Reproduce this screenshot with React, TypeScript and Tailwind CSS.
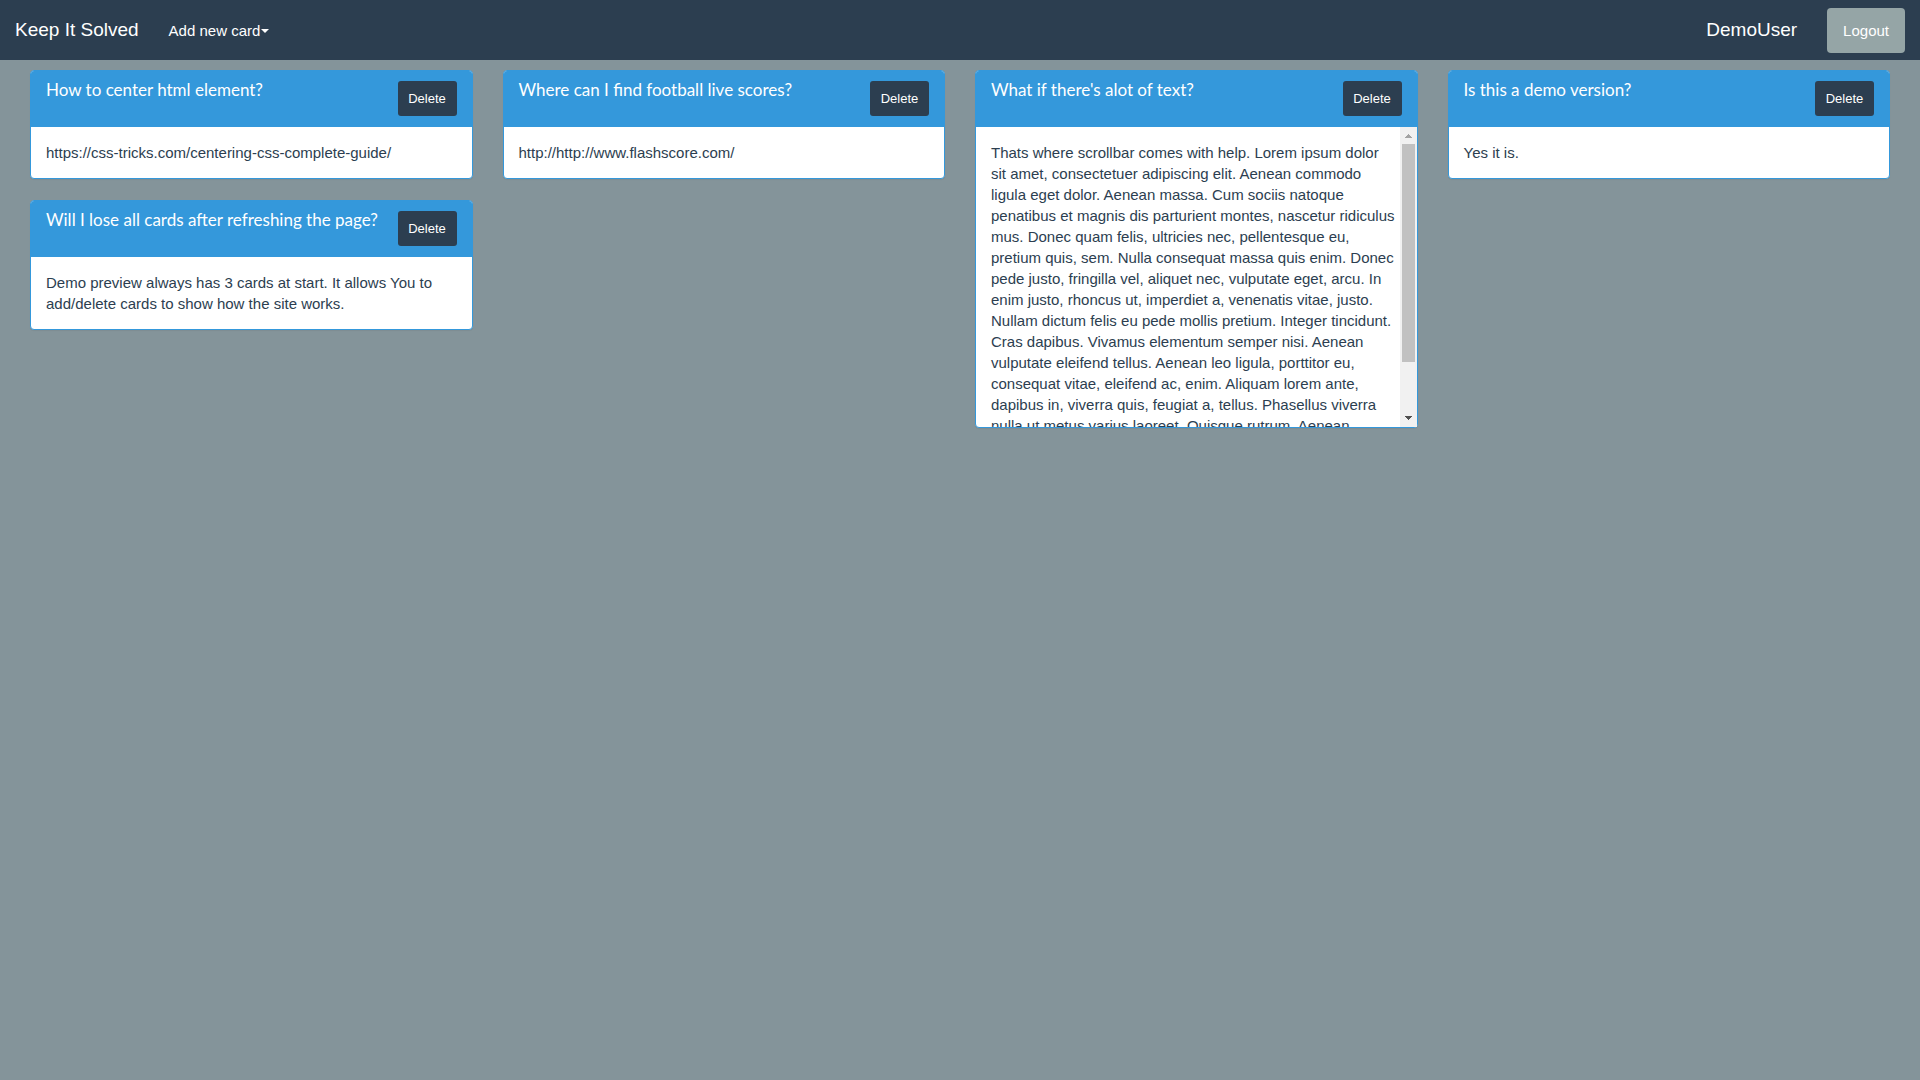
import { useRef, useState } from "react";

type CardData = { id: number; title: string; body: string; scroll?: boolean };

const loremBody = `Thats where scrollbar comes with help. Lorem ipsum dolor
sit amet, consectetuer adipiscing elit. Aenean commodo
ligula eget dolor. Aenean massa. Cum sociis natoque
penatibus et magnis dis parturient montes, nascetur ridiculus
mus. Donec quam felis, ultricies nec, pellentesque eu,
pretium quis, sem. Nulla consequat massa quis enim. Donec
pede justo, fringilla vel, aliquet nec, vulputate eget, arcu. In
enim justo, rhoncus ut, imperdiet a, venenatis vitae, justo.
Nullam dictum felis eu pede mollis pretium. Integer tincidunt.
Cras dapibus. Vivamus elementum semper nisi. Aenean
vulputate eleifend tellus. Aenean leo ligula, porttitor eu,
consequat vitae, eleifend ac, enim. Aliquam lorem ante,
dapibus in, viverra quis, feugiat a, tellus. Phasellus viverra
nulla ut metus varius laoreet. Quisque rutrum. Aenean
imperdiet. Etiam ultricies nisi vel augue. Curabitur
ullamcorper ultricies nisi.`;

const initialColumns: CardData[][] = [
  [
    { id: 1, title: "How to center html element?", body: "https://css-tricks.com/centering-css-complete-guide/" },
    {
      id: 2,
      title: "Will I lose all cards after refreshing the page?",
      body: "Demo preview always has 3 cards at start. It allows You to add/delete cards to show how the site works.",
    },
  ],
  [{ id: 3, title: "Where can I find football live scores?", body: "http://http://www.flashscore.com/" }],
  [{ id: 4, title: "What if there's alot of text?", body: loremBody, scroll: true }],
  [{ id: 5, title: "Is this a demo version?", body: "Yes it is." }],
];

function ScrollBody({ text }: { text: string }) {
  const area = useRef<HTMLDivElement>(null);
  const [offset, setOffset] = useState(0);
  const step = (delta: number) => area.current?.scrollBy({ top: delta });

  return (
    <div className="flex h-[300px]">
      <div
        ref={area}
        onScroll={(e) => setOffset(e.currentTarget.scrollTop)}
        className="min-w-0 flex-1 overflow-x-hidden overflow-y-auto py-[15px] pl-[15px] whitespace-pre [scrollbar-width:none]"
      >
        {text}
      </div>
      <div className="flex w-[17px] flex-col bg-[#f1f1f1]">
        <button type="button" aria-label="Scroll up" onClick={() => step(-40)} className="flex h-[17px] justify-center pt-[7px]">
          <svg width="7" height="4" viewBox="0 0 7 4" fill="#a3a3a3" shapeRendering="crispEdges" aria-hidden="true">
            <path d="M3 0h1v1h1v1h1v1h1v1H0V3h1V2h1V1h1z" />
          </svg>
        </button>
        <div className="flex-1 px-[2px]">
          <div className="h-[218px] bg-[#c1c1c1]" style={{ marginTop: Math.min(offset * 0.73, 48) }} />
        </div>
        <button type="button" aria-label="Scroll down" onClick={() => step(40)} className="flex h-[17px] justify-center pt-[6px]">
          <svg width="7" height="4" viewBox="0 0 7 4" fill="#505050" shapeRendering="crispEdges" aria-hidden="true">
            <path d="M0 0h7v1H6v1H5v1H4v1H3V3H2V2H1V1H0z" />
          </svg>
        </button>
      </div>
    </div>
  );
}

function Card({ card, onDelete }: { card: CardData; onDelete: () => void }) {
  return (
    <article className="rounded border border-[#3498db] bg-white shadow-[0_1px_1px_rgba(0,0,0,0.05)]">
      <header className="flex items-start justify-between rounded-t-[3px] bg-[#3498db] px-[15px] pt-[10px] pb-[11px]">
        <h3 className="font-[Lato,sans-serif] text-[17px] leading-[18px] text-white">{card.title}</h3>
        <button
          type="button"
          onClick={onDelete}
          className="h-[35px] w-[59px] shrink-0 rounded-[3px] bg-[#2c3e50] text-center text-[13px] text-white"
        >
          Delete
        </button>
      </header>
      {card.scroll ? <ScrollBody text={card.body} /> : <p className="p-[15px]">{card.body}</p>}
    </article>
  );
}

export default function App() {
  const [columns, setColumns] = useState(initialColumns);
  const remove = (id: number) => setColumns((cols) => cols.map((c) => c.filter((card) => card.id !== id)));

  return (
    <div className="min-h-screen bg-[#84949a] font-['Liberation_Sans',Arial,sans-serif] text-[15px] leading-[21px] text-[#2c3e50]">
      <nav className="flex h-[60px] items-center bg-[#2c3e50] px-[15px] text-white">
        <a href="#home" className="text-[19px] leading-[22px]">
          Keep It Solved
        </a>
        <button type="button" className="ml-[30px] flex items-center gap-px">
          Add new card
          <svg width="8" height="6" viewBox="0 0 8 6" fill="currentColor" aria-hidden="true">
            <path d="M0 2h8L4 6z" />
          </svg>
        </button>
        <a href="#user" className="ml-auto text-[19px] leading-[22px]">
          DemoUser
        </a>
        <button type="button" className="ml-[30px] h-[45px] rounded bg-[#95a5a6] px-4">
          Logout
        </button>
      </nav>
      <main className="grid grid-cols-4 gap-[30px] px-[30px] pt-[10px]">
        {columns.map((cards, i) => (
          <div key={i} className="flex flex-col gap-[21px]">
            {cards.map((card) => (
              <Card key={card.id} card={card} onDelete={() => remove(card.id)} />
            ))}
          </div>
        ))}
      </main>
    </div>
  );
}
